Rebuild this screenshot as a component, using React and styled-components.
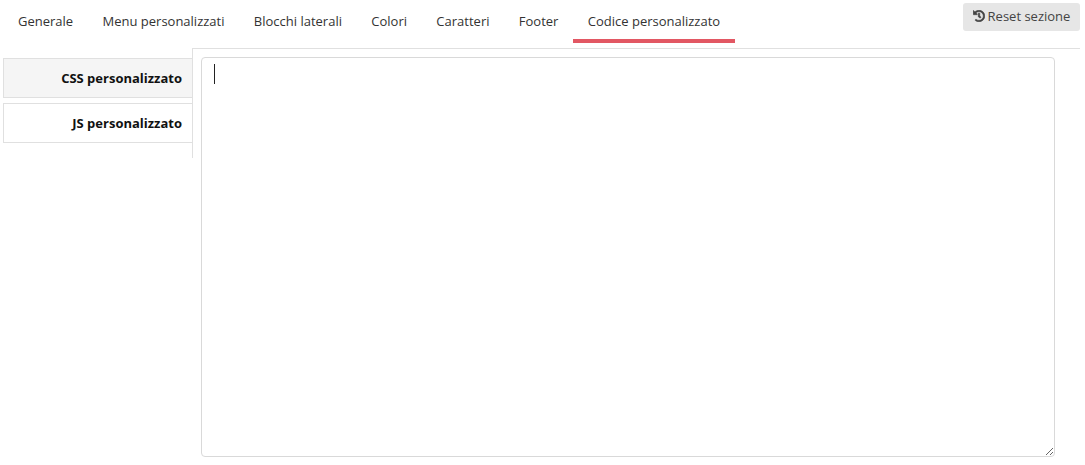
import React from "react";
import styled, { createGlobalStyle } from "styled-components";
import { FaHistory } from "react-icons/fa";

const GlobalStyle = createGlobalStyle`
  html, body {
    margin: 0;
    padding: 0;
    background: #fff;
    font-family: "Open Sans", "Liberation Sans", sans-serif;
    overflow: hidden;
  }
`;

const Page = styled.div`
  width: 1080px;
  height: 465px;
  position: relative;
`;

const TopBar = styled.div`
  height: 48px;
  display: flex;
  justify-content: space-between;
  align-items: flex-start;
`;

const TabList = styled.nav`
  display: flex;
  padding-left: 3px;
`;

const Tab = styled.a`
  display: block;
  height: 43px;
  box-sizing: border-box;
  padding: 12px 15px 0;
  margin-right: -0.67px;
  font-size: 13px;
  line-height: 18px;
  color: #333;
  white-space: nowrap;
  border-bottom: 4px solid ${(p) => (p.$active ? "#e25763" : "transparent")};
`;

const ResetButton = styled.button`
  margin-top: 3px;
  width: 117px;
  height: 28px;
  border: 0;
  border-radius: 3px;
  background: #e6e6e6;
  color: #444;
  font-family: inherit;
  font-size: 13px;
  display: flex;
  align-items: center;
  justify-content: center;
  gap: 3px;
  padding: 0 0 2px;

  svg {
    width: 12px;
    height: 12px;
    stroke: currentColor;
    stroke-width: 24px;
  }
`;

const Body = styled.div`
  display: flex;
  padding-left: 3px;
`;

const SideTabs = styled.div`
  width: 189px;
  padding-top: 10px;
  display: flex;
  flex-direction: column;
  gap: 5px;
`;

const SideTab = styled.div`
  height: 40px;
  box-sizing: border-box;
  padding-right: 10px;
  border: 1px solid #e0e0e0;
  border-right: 0;
  background: ${(p) => (p.$active ? "#f5f5f5" : "#fff")};
  color: #111;
  font-size: 13px;
  font-weight: 700;
  line-height: 38px;
  text-align: right;
`;

const Content = styled.div`
  flex: 1;
  height: 417px;
  position: relative;
  border-top: 1px solid #e0e0e0;
  padding: 8px 0 0 9px;
  box-sizing: border-box;

  &::before {
    content: "";
    position: absolute;
    left: 0;
    top: 0;
    width: 1px;
    height: 109px;
    background: #e0e0e0;
  }
`;

const Editor = styled.textarea`
  display: block;
  width: 854px;
  height: 400px;
  box-sizing: border-box;
  border: 1px solid #d9d9d9;
  border-radius: 4px;
  outline: none;
  background: #fff;
  resize: both;
  padding: 0;
`;

const Caret = styled.span`
  position: absolute;
  left: 22px;
  top: 15px;
  width: 1px;
  height: 20px;
  background: #222;
`;

const tabs = [
  "Generale",
  "Menu personalizzati",
  "Blocchi laterali",
  "Colori",
  "Caratteri",
  "Footer",
  "Codice personalizzato",
];

export default function App() {
  return (
    <>
      <GlobalStyle />
      <Page>
        <TopBar>
          <TabList>
            {tabs.map((t) => (
              <Tab key={t} $active={t === "Codice personalizzato"}>
                {t}
              </Tab>
            ))}
          </TabList>
          <ResetButton>
            <FaHistory />
            Reset sezione
          </ResetButton>
        </TopBar>
        <Body>
          <SideTabs>
            <SideTab $active>CSS personalizzato</SideTab>
            <SideTab>JS personalizzato</SideTab>
          </SideTabs>
          <Content>
            <Editor />
            <Caret />
          </Content>
        </Body>
      </Page>
    </>
  );
}
